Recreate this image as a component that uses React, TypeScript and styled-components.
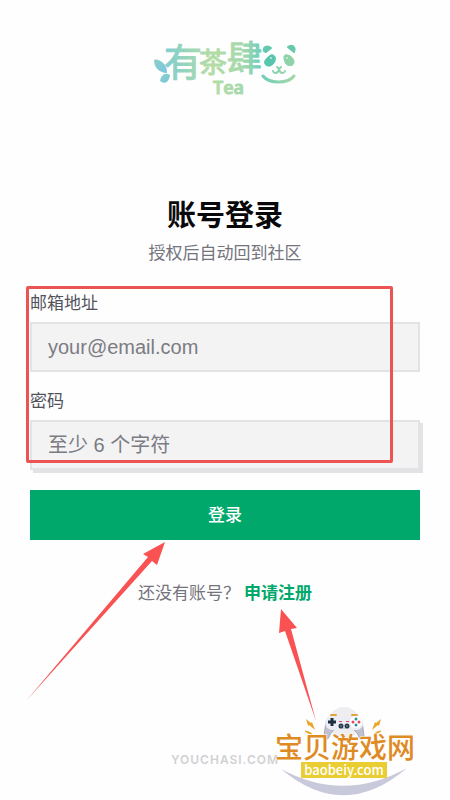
import React from "react";
import styled, { createGlobalStyle } from "styled-components";

const GlobalStyle = createGlobalStyle`
  * { box-sizing: border-box; }
  body {
    margin: 0;
    background: #fefefe;
    font-family: "Liberation Sans", "Noto Sans CJK SC", sans-serif;
  }
`;

const Page = styled.div`
  position: relative;
  display: flex;
  flex-direction: column;
  min-height: 100vh;
  padding: 20px 30px 28px;
  overflow: hidden;
`;

const Header = styled.header`
  display: flex;
  justify-content: center;
`;

const Main = styled.main`
  position: relative;
  margin-top: 90px;
`;

const Title = styled.h1`
  margin: 0;
  color: #09090b;
  font-size: 29px;
  font-weight: 700;
  line-height: 44px;
  text-align: center;
`;

const Subtitle = styled.p`
  margin: 4px 0 0;
  color: #74747d;
  font-size: 17px;
  line-height: 24px;
  text-align: center;
`;

const Form = styled.form`
  display: flex;
  flex-direction: column;
  gap: 20px;
  margin-top: 24px;
`;

const Fields = styled.div`
  position: relative;
  display: flex;
  flex-direction: column;
  gap: 16px;
`;

const Field = styled.div`
  display: flex;
  flex-direction: column;
  gap: 4px;
`;

const Label = styled.label`
  color: #52525b;
  font-size: 17px;
  line-height: 28px;
`;

const Input = styled.input<{ $raised?: boolean }>`
  width: 100%;
  height: 50px;
  padding: 0 16px;
  border: 2px solid #e3e3e5;
  border-radius: 0;
  outline: none;
  background: #f3f3f3;
  box-shadow: ${(p) => (p.$raised ? "3px 3px 0 #e3e3e5" : "none")};
  color: #27272a;
  font-family: inherit;
  font-size: 20px;

  &::placeholder {
    color: #7b7b83;
    opacity: 1;
  }
`;

const Submit = styled.button`
  height: 50px;
  padding: 0 0 4px;
  border: 0;
  background: #00a86b;
  color: #fff;
  font-family: inherit;
  font-size: 17px;
  font-weight: 500;
  cursor: pointer;
`;

const SignUp = styled.p`
  margin: 42px 0 0;
  color: #74747d;
  font-size: 17px;
  line-height: 24px;
  text-align: center;
`;

const SignUpLink = styled.a`
  margin-left: 4px;
  color: #00a86b;
  font-weight: 700;
  text-decoration: none;
`;

const Footer = styled.footer`
  margin-top: auto;
  color: #d1d1d4;
  font-family: Inter, sans-serif;
  font-size: 12px;
  font-weight: 600;
  letter-spacing: 1px;
  line-height: 24px;
  text-align: center;
`;

const Highlight = styled.div`
  position: absolute;
  inset: -4px 27px 7px -4px;
  border: 3px solid #ec5353;
  border-radius: 2px;
  pointer-events: none;
`;

const Arrows = styled.svg`
  position: absolute;
  top: 348px;
  left: 50%;
  margin-left: -200px;
  pointer-events: none;
`;

const Watermark = styled.svg`
  position: absolute;
  right: 30px;
  bottom: 0;
`;

function Logo() {
  return (
    <svg width="150" height="84" viewBox="150 20 150 84" role="img" aria-label="有茶肆 Tea">
      <defs>
        <linearGradient id="ink" gradientUnits="userSpaceOnUse" x1="155" y1="0" x2="297" y2="0">
          <stop offset="0" stopColor="#7cc8de" />
          <stop offset="0.18" stopColor="#90d3c0" />
          <stop offset="0.4" stopColor="#b4dca5" />
          <stop offset="0.62" stopColor="#a5d8ae" />
          <stop offset="0.75" stopColor="#6fcdbb" />
          <stop offset="1" stopColor="#a9d9a4" />
        </linearGradient>
        <linearGradient id="leaf" x1="0" y1="0" x2="1" y2="1">
          <stop offset="0" stopColor="#8bd0c8" />
          <stop offset="1" stopColor="#7bc4e0" />
        </linearGradient>
      </defs>
      <path d="M154 60c3-1 5 0 8 2 4 3 5 7 5 11-7 0-13-5-13-13Z" fill="url(#leaf)" />
      <path d="M160 81c1-6 5-9 10-6-1 7-5 10-10 6Z" fill="url(#leaf)" />
      <g
        fill="url(#ink)"
        stroke="url(#ink)"
        strokeWidth="1"
        strokeLinejoin="round"
        fontFamily="Noto Sans CJK SC, sans-serif"
        fontWeight="400"
      >
        <text x="164" y="76" fontSize="38">有</text>
        <text x="199" y="73" fontSize="28">茶</text>
        <text x="227" y="71" fontSize="35">肆</text>
      </g>
      <text
        x="213"
        y="94"
        fill="url(#ink)"
        stroke="url(#ink)"
        strokeWidth="1"
        fontFamily="Open Sans, sans-serif"
        fontSize="18"
        fontWeight="600"
      >
        Tea
      </text>
      <g>
        <path
          d="M264 51c-1-4 3-6 7-3l-5 4ZM288 47c4-3 8 0 6 5Z"
          fill="#65c9ad"
          stroke="#65c9ad"
          strokeWidth="2"
          strokeLinejoin="round"
        />
        <path
          d="M273 55c4 1 3 9-3 11-6 1-7-5-3-8 2-2 4-4 6-3Z"
          fill="#58c6ad"
          stroke="#58c6ad"
          strokeLinejoin="round"
        />
        <path
          d="M285 55c4-1 9 3 9 7s-5 5-8 2c-2-3-3-8-1-9Z"
          fill="#8ed2a9"
          stroke="#8ed2a9"
          strokeLinejoin="round"
        />
        <circle cx="271" cy="58" r="1" fill="#c6ebdf" />
        <circle cx="287" cy="58" r="1" fill="#d3ecdb" />
        <g fill="none" stroke="url(#ink)" strokeLinecap="round" strokeLinejoin="round">
          <path d="M263 76c6 8 25 8 31 0" strokeWidth="3" />
          <path d="m277 67 2 2 2-2M279 69c-1 5-5 5-6 2M279 69c1 5 5 5 6 2" strokeWidth="2" />
        </g>
      </g>
    </svg>
  );
}

function GameSiteMark() {
  return (
    <Watermark width="150" height="96" viewBox="270 704 150 96" role="img" aria-label="宝贝游戏网">
      <path d="M281 769Q344 803 407 768Q344 822 281 769Z" fill="#c8c9da" />
      <circle cx="344" cy="723" r="16" fill="#eeeef1" />
      <g fill="#e8a72a">
        <path d="m306 719 5 4 1-1 3 8-6-5-1 1Z" />
        <path d="m381 719-5 4-1-1-3 8 6-5 1 1Z" />
        <path d="m305 731 4 1 3 2-4-1Z" stroke="#e8a72a" />
        <path d="m381 731-4 1-3 2 4-1Z" stroke="#e8a72a" />
      </g>
      <path d="M331 715h5M352 715h5" stroke="#e2a53c" strokeWidth="2" strokeLinecap="round" />
      <path
        d="M326 721l-2 15c0 4 3 5 5 1 2-5 5-8 9-9h12c4 1 7 4 9 9 2 4 5 3 5-1l-2-15Z"
        fill="#c0c1d0"
        stroke="#a9aabc"
      />
      <path
        d="M332 716h7l2 2h6l2-2h7c9 0 10 13 1 14h-6l-3-2h-8l-3 2h-5c-9-1-9-14 0-14Z"
        fill="#ececf4"
      />
      <path d="M332 718v8M328 722h8" stroke="#1c3042" strokeWidth="3" />
      <circle cx="356" cy="722" r="6" fill="#fff" />
      <g fill="#2a91a0">
        <circle cx="356" cy="719" r="1.5" />
        <circle cx="356" cy="725" r="1.5" />
      </g>
      <g fill="#df4d61">
        <circle cx="353" cy="722" r="1.5" />
        <circle cx="359" cy="722" r="1.5" />
        <path d="M339 721h3v1h-3ZM346 721h3v1h-3Z" />
      </g>
      <circle cx="341" cy="726" r="2.5" fill="#263a4c" />
      <circle cx="347" cy="726" r="2.5" fill="#263a4c" />
      <circle cx="341" cy="726" r="1" fill="#5b7489" />
      <circle cx="347" cy="726" r="1" fill="#5b7489" />
      <text
        x="345"
        y="758"
        fill="#df8a23"
        stroke="#fff"
        strokeWidth="1"
        paintOrder="stroke"
        fontFamily="Noto Sans CJK SC, sans-serif"
        fontSize="28"
        fontWeight="500"
        textAnchor="middle"
      >
        宝贝游戏网
      </text>
      <rect x="301" y="762" width="86" height="16" fill="#e9cd32" />
      <text
        x="344"
        y="775"
        fill="#fff"
        fontFamily="Noto Sans CJK SC, sans-serif"
        fontSize="13"
        fontWeight="500"
        textAnchor="middle"
      >
        baobeiy.com
      </text>
    </Watermark>
  );
}

export default function App() {
  return (
    <>
      <GlobalStyle />
      <Page>
        <Header>
          <Logo />
        </Header>
        <Main>
          <Title>账号登录</Title>
          <Subtitle>授权后自动回到社区</Subtitle>
          <Form onSubmit={(e) => e.preventDefault()}>
            <Fields>
              <Field>
                <Label htmlFor="email">邮箱地址</Label>
                <Input id="email" type="email" placeholder="your@email.com" />
              </Field>
              <Field>
                <Label htmlFor="password">密码</Label>
                <Input id="password" type="password" placeholder="至少 6 个字符" $raised />
              </Field>
              <Highlight />
            </Fields>
            <Submit type="submit">登录</Submit>
          </Form>
          <SignUp>
            还没有账号？<SignUpLink href="#register">申请注册</SignUpLink>
          </SignUp>
          <Arrows width="300" height="182" viewBox="25 542 300 182" aria-hidden="true">
            <path d="m165 542-22 12 5 3L26 701 152 561l5 4Z" fill="#fa5252" />
            <path d="m281 609-2 24 6-2 31 90-25-92 6-1Z" fill="#fa5252" />
          </Arrows>
        </Main>
        <Footer>YOUCHASI.COM</Footer>
        <GameSiteMark />
      </Page>
    </>
  );
}
